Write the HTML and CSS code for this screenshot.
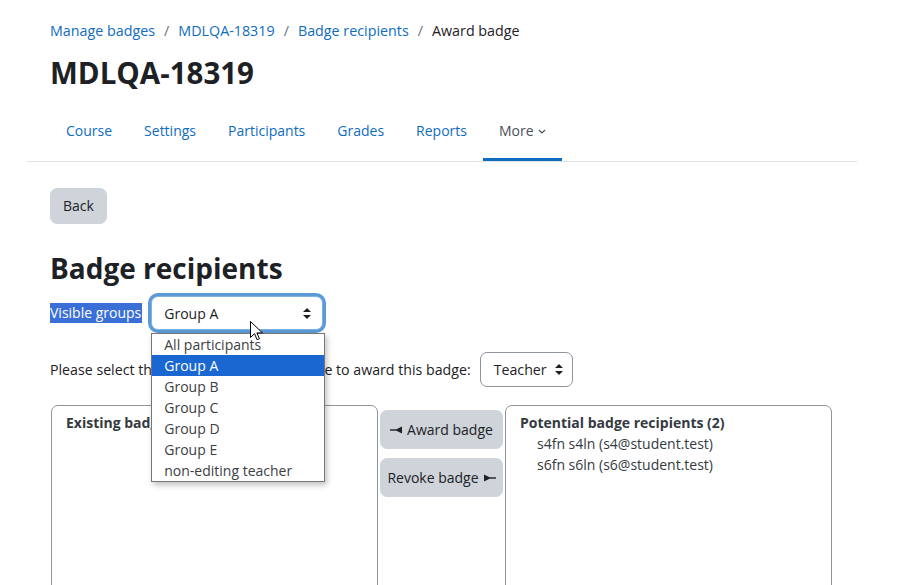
FILE: index.html
```html
<!DOCTYPE html>
<html lang="en">
<head>
    <meta charset="UTF-8">
    <title>Award badge | MDLQA-18319</title>
    <link rel="stylesheet" href="styles.css">
</head>
<body>
    <div class="page">
        <div class="page-header">
            <nav class="breadcrumb">
                <a href="#">Manage badges</a>
                <span class="sep">/</span>
                <a href="#">MDLQA-18319</a>
                <span class="sep">/</span>
                <a href="#">Badge recipients</a>
                <span class="sep">/</span>
                <span class="current">Award badge</span>
            </nav>
            <h1>MDLQA-18319</h1>
        </div>
        <ul class="secondary-nav">
            <li><a href="#">Course</a></li>
            <li><a href="#">Settings</a></li>
            <li><a href="#">Participants</a></li>
            <li><a href="#">Grades</a></li>
            <li><a href="#">Reports</a></li>
            <li class="active"><a href="#">More <span class="caret"><svg width="8" height="5" viewBox="0 0 8 5"><path d="M1 1l3 3 3-3" fill="none" stroke="#495057" stroke-width="1.2"/></svg></span></a></li>
        </ul>

        <div class="content">
            <button class="btn">Back</button>
            <h2>Badge recipients</h2>

            <div class="group-row">
                <span class="label-selected">Visible groups</span>
                <div class="select-wrap">
                    <div class="select focused">
                        <span>Group A</span>
                        <svg class="updown" width="8" height="11" viewBox="0 0 8 11"><path d="M4 0l4 4H0z M4 11l4-4H0z" fill="#1d2125"/></svg>
                    </div>
                    <ul class="dropdown">
                        <li>All participants</li>
                        <li class="hl">Group A</li>
                        <li>Group B</li>
                        <li>Group C</li>
                        <li>Group D</li>
                        <li>Group E</li>
                        <li>non-editing teacher</li>
                    </ul>
                    <svg class="cursor" width="13" height="20" viewBox="0 0 13 20"><path d="M0.5 0.5v16l4-3.8 2.6 6 2.4-1-2.6-5.8h5.6z" fill="#fff" stroke="#000" stroke-width="1"/></svg>
                </div>
            </div>

            <div class="role-row">
                <span>Please select the role you would like to use to award this badge:</span>
                <div class="select small">
                    <span>Teacher</span>
                    <svg class="updown" width="8" height="11" viewBox="0 0 8 11"><path d="M4 0l4 4H0z M4 11l4-4H0z" fill="#1d2125"/></svg>
                </div>
            </div>

            <div class="award-grid">
                <div class="userbox">
                    <div class="group-label">Existing badge recipients</div>
                </div>
                <div class="actions">
                    <button class="btn">
                        <svg width="12" height="10" viewBox="0 0 12 10"><rect x="0" y="4.3" width="6" height="1.4" fill="#1d2125"/><path d="M5 5L12 1.5v7z" fill="#1d2125"/></svg>
                        Award badge
                    </button>
                    <button class="btn">
                        Revoke badge
                        <svg width="12" height="10" viewBox="0 0 12 10"><path d="M0 1.5v7L7 5z" fill="#1d2125"/><rect x="6" y="4.3" width="6" height="1.4" fill="#1d2125"/></svg>
                    </button>
                </div>
                <div class="userbox">
                    <div class="group-label">Potential badge recipients (2)</div>
                    <div class="user">s4fn s4ln (s4@student.test)</div>
                    <div class="user">s6fn s6ln (s6@student.test)</div>
                </div>
            </div>
        </div>
    </div>
</body>
</html>
```

FILE: styles.css
```css
body {
    margin: 0;
    font-family: "Open Sans", "Noto Sans", sans-serif;
    font-size: 14px;
    line-height: 1.5;
    color: #1d2125;
    background-color: #fff;
    overflow: hidden;
}
a {
    color: #0f6cbf;
    text-decoration: none;
}
.page {
    margin-left: 27px;
    width: 830px;
}
.page-header {
    padding: 20px 23px 0;
}
.breadcrumb {
    display: flex;
    align-items: center;
    font-size: 14.3px;
}
.breadcrumb .sep {
    color: #6a737b;
    padding: 0 9px;
}
h1 {
    font-size: 29.5px;
    font-weight: 700;
    line-height: 1.2;
    margin: 14px 0 0;
}
.secondary-nav {
    list-style: none;
    margin: 10px 0 0;
    padding: 0 0 0 23px;
    display: flex;
    border-bottom: 1px solid #dee2e6;
}
.secondary-nav li a {
    display: flex;
    align-items: center;
    padding: 2px 16px 0;
    border-bottom: 3px solid transparent;
    height: 55px;
}
.secondary-nav li.active a {
    color: #495057;
    border-bottom-color: #0f6cbf;
}
.caret {
    display: inline-flex;
    margin-left: 4px;
    margin-top: 2px;
}
.content {
    padding: 26px 23px 0;
}
.btn {
    font-family: inherit;
    font-size: 14px;
    line-height: 1.5;
    color: #1d2125;
    background-color: #ced4da;
    border: 1px solid #ced4da;
    border-radius: 7px;
    padding: 6px 12px;
    display: inline-flex;
    align-items: center;
    gap: 5px;
    white-space: nowrap;
    height: 36px;
}
h2 {
    font-size: 28px;
    font-weight: 700;
    line-height: 1.2;
    margin: 28px 0 0;
}
.group-row {
    display: flex;
    align-items: center;
    margin-top: 8px;
}
.label-selected {
    background-color: #3a6fd8;
    color: #fff;
    line-height: 20px;
    padding-right: 1px;
}
.select-wrap {
    position: relative;
    margin-left: 9px;
}
.select {
    display: flex;
    align-items: center;
    justify-content: space-between;
    box-sizing: border-box;
    border: 1px solid #8f959e;
    border-radius: 7px;
    padding: 0 11px 0 12px;
    height: 35px;
    background: #fff;
}
.select.focused {
    width: 172px;
    height: 34px;
    margin: 3px 0;
    border-color: #7fb1e3;
    box-shadow: 0 0 0 3px #5b9ad6;
}
.dropdown {
    position: absolute;
    top: 40px;
    left: 0;
    width: 174px;
    box-sizing: border-box;
    margin: 0;
    padding: 0;
    list-style: none;
    background: #fff;
    border: 1px solid #767676;
    box-shadow: 2px 3px 6px rgba(0, 0, 0, 0.25);
    z-index: 5;
}
.dropdown li {
    height: 21px;
    line-height: 21px;
    padding-left: 12px;
    color: #3c4043;
}
.dropdown li.hl {
    background-color: #1a67d2;
    color: #fff;
}
.cursor {
    position: absolute;
    left: 99px;
    top: 28px;
    z-index: 6;
}
.role-row {
    display: flex;
    align-items: center;
    margin-top: 19px;
    font-size: 14.2px;
}
.select.small {
    margin-left: 9px;
    gap: 8px;
    padding: 0 9px 0 13px;
}
.award-grid {
    display: flex;
    margin-top: 18px;
    margin-left: 1px;
}
.userbox {
    width: 327px;
    height: 400px;
    box-sizing: border-box;
    border: 1px solid #8f959e;
    border-radius: 7px;
    padding: 6px 14px;
    line-height: 21px;
}
.group-label {
    font-weight: 700;
    color: #343a40;
}
.user {
    padding-left: 17px;
    color: #343a40;
}
.actions {
    display: flex;
    flex-direction: column;
    gap: 9px;
    width: 123px;
    margin: 5px 2px 0;
}
.actions .btn {
    height: 39px;
    justify-content: center;
    padding: 0 4px;
}
```
